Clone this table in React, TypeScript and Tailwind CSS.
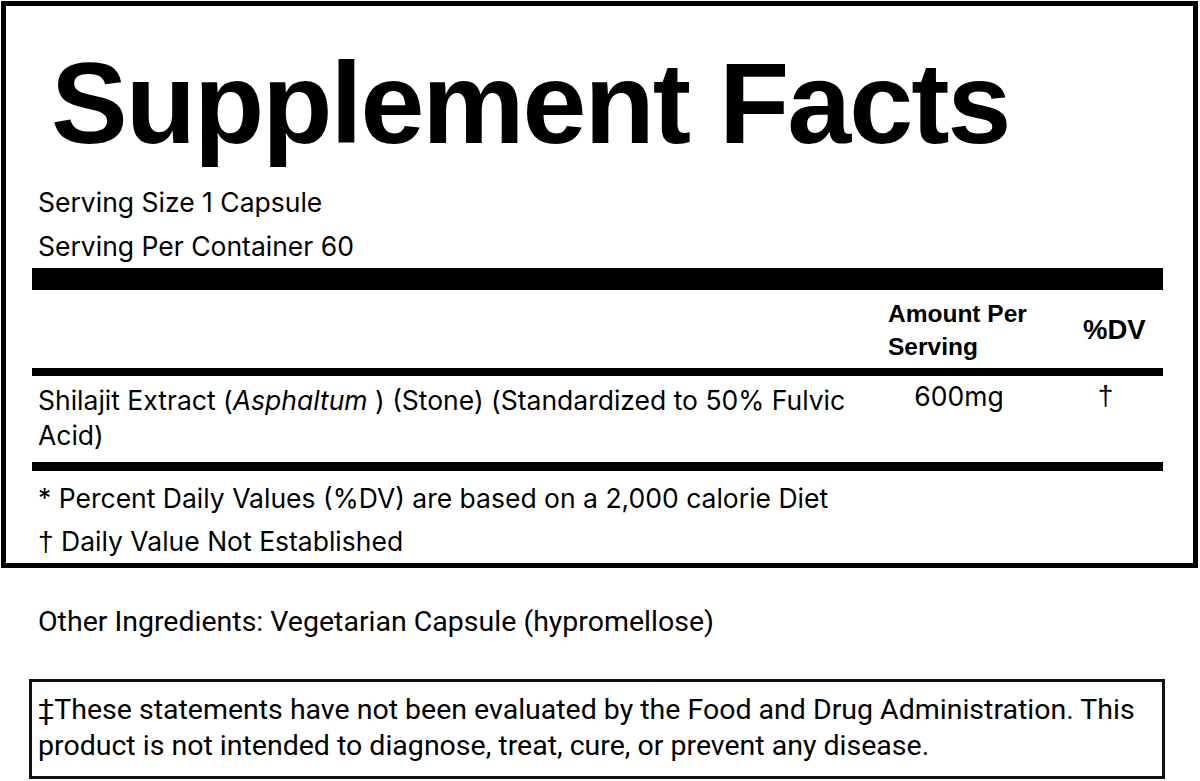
import React from "react";

const inter = { fontFamily: "Inter, 'Noto Sans', sans-serif" };
const roboto = { fontFamily: "Roboto, 'Noto Sans', sans-serif" };
const lib = { fontFamily: "'Liberation Sans', Arial, sans-serif" };

export default function App() {
  return (
    <div className="w-[1200px] h-[781px] bg-white text-black overflow-hidden" style={inter}>
      <div className="ml-[1px] mt-[1px] w-[1197px] h-[567px] border-[5px] border-black pl-[26px] pr-[30px] flex flex-col">
        <h1 className="pl-[19px] pt-[40px] h-[155px] text-[115px] leading-[115px] font-bold tracking-[-2px]" style={lib}>Supplement Facts</h1>
        <div className="pl-[6px] mt-[19px] text-[26.5px] leading-[44px]">
          <div>Serving Size 1 Capsule</div>
          <div>Serving Per Container 60</div>
        </div>
        <div className="h-[22px] bg-black" />
        <div className="flex h-[78px] items-center pt-[2px]" style={lib}>
          <div className="flex-1" />
          <div className="w-[178px] pl-[18px] text-[24.5px] font-bold leading-[33px]">Amount Per<br />Serving</div>
          <div className="w-[115px] pl-[35px] text-[27.5px] font-bold">%DV</div>
        </div>
        <div className="h-[9px] bg-black" />
        <div className="flex h-[86px]">
          <div className="flex-1 pl-[6px] pr-[20px] pt-[7px] text-[26.5px] leading-[35px]">
            Shilajit Extract (<i>Asphaltum</i> ) (Stone) (Standardized to 50% Fulvic Acid)
          </div>
          <div className="w-[178px] pt-[6px] text-center text-[26.5px] leading-[28px]">600mg</div>
          <div className="w-[115px] pt-[6px] text-center text-[28px] leading-[28px]" style={lib}>†</div>
        </div>
        <div className="h-[9px] bg-black" />
        <div className="pl-[6px] pt-[6px] text-[26.5px] leading-[43px]">
          <div>* Percent Daily Values (%DV) are based on a 2,000 calorie Diet</div>
          <div><span style={lib} className="text-[28px]">†</span> Daily Value Not Established</div>
        </div>
      </div>
      <div className="pl-[38px] mt-[38px] text-[28.5px] leading-[32px]" style={roboto}>
        Other Ingredients: Vegetarian Capsule (hypromellose)
      </div>
      <div className="ml-[29px] mt-[41px] w-[1136px] h-[100px] border-[3px] border-[#111] pl-[6px] pt-[10px] text-[28.5px] leading-[36px]" style={roboto}>
        ‡These statements have not been evaluated by the Food and Drug Administration. This product is not intended to diagnose, treat, cure, or prevent any disease.
      </div>
    </div>
  );
}
